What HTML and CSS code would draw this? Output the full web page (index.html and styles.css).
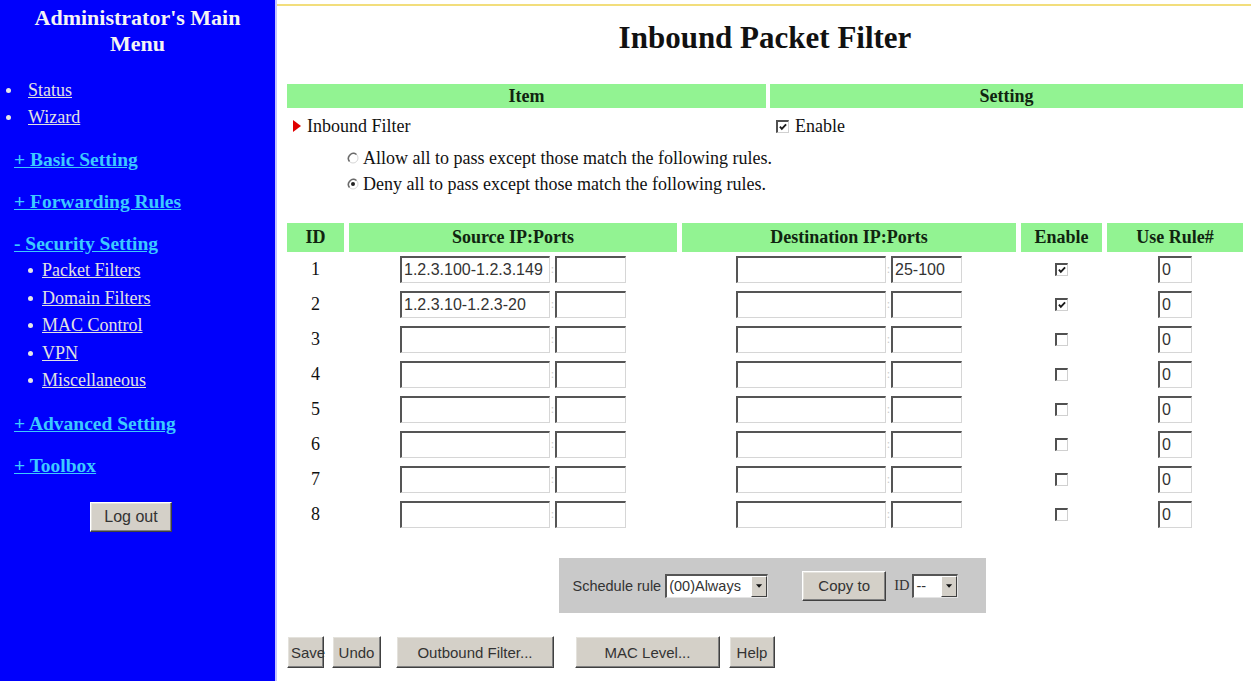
FILE: index.html
```html
<!DOCTYPE html>
<html lang="en">
<head>
<meta charset="utf-8">
<title>Inbound Packet Filter</title>
<link rel="stylesheet" href="styles.css">
</head>
<body>
<div class="page">
  <nav class="menu">
    <h1 class="menu-title">Administrator's Main<br>Menu</h1>
    <ul class="top-links">
      <li><a href="#">Status</a></li>
      <li><a href="#">Wizard</a></li>
    </ul>
    <a class="section" href="#">+ Basic Setting</a>
    <a class="section" href="#">+ Forwarding Rules</a>
    <a class="section" href="#">- Security Setting</a>
    <ul class="sub-links">
      <li><a href="#">Packet Filters</a></li>
      <li><a href="#">Domain Filters</a></li>
      <li><a href="#">MAC Control</a></li>
      <li><a href="#">VPN</a></li>
      <li><a href="#">Miscellaneous</a></li>
    </ul>
    <a class="section" href="#">+ Advanced Setting</a>
    <a class="section" href="#">+ Toolbox</a>
    <div class="logout-row"><button class="btn btn-logout" type="button">Log out</button></div>
  </nav>

  <main class="content">
    <h2 class="page-title">Inbound Packet Filter</h2>

    <div class="item-table">
      <div class="head">Item</div>
      <div class="head">Setting</div>
      <div class="item-name"><span class="arrow"></span>Inbound Filter</div>
      <div class="item-setting">
        <span class="cb checked"><svg viewBox="0 0 13 13"><path d="M2.5 6 L5 9 L10.5 3" /></svg></span>Enable
      </div>
    </div>

    <div class="policy">
      <label class="policy-line">
        <span class="radio"><svg viewBox="0 0 12 12"><circle class="r-fill" cx="6" cy="6" r="5"/><path class="r-dark" d="M9.5 2.5 A5 5 0 0 0 2.5 9.5"/></svg></span>Allow all to pass except those match the following rules.
      </label>
      <label class="policy-line">
        <span class="radio"><svg viewBox="0 0 12 12"><circle class="r-fill" cx="6" cy="6" r="5"/><path class="r-dark" d="M9.5 2.5 A5 5 0 0 0 2.5 9.5"/><circle class="r-dot" cx="6" cy="6" r="2"/></svg></span>Deny all to pass except those match the following rules.
      </label>
    </div>

    <div class="rules">
      <div class="rh">ID</div>
      <div class="rh">Source IP:Ports</div>
      <div class="rh">Destination IP:Ports</div>
      <div class="rh">Enable</div>
      <div class="rh">Use Rule#</div>

      <div class="rc id">1</div>
      <div class="rc"><input class="field ip" value="1.2.3.100-1.2.3.149"><span class="sep">:</span><input class="field port" value=""></div>
      <div class="rc"><input class="field ip" value=""><span class="sep">:</span><input class="field port" value="25-100"></div>
      <div class="rc"><span class="cb checked"><svg viewBox="0 0 13 13"><path d="M2.5 6 L5 9 L10.5 3" /></svg></span></div>
      <div class="rc"><input class="field rule" value="0"></div>

      <div class="rc id">2</div>
      <div class="rc"><input class="field ip" value="1.2.3.10-1.2.3-20"><span class="sep">:</span><input class="field port" value=""></div>
      <div class="rc"><input class="field ip" value=""><span class="sep">:</span><input class="field port" value=""></div>
      <div class="rc"><span class="cb checked"><svg viewBox="0 0 13 13"><path d="M2.5 6 L5 9 L10.5 3" /></svg></span></div>
      <div class="rc"><input class="field rule" value="0"></div>

      <div class="rc id">3</div>
      <div class="rc"><input class="field ip" value=""><span class="sep">:</span><input class="field port" value=""></div>
      <div class="rc"><input class="field ip" value=""><span class="sep">:</span><input class="field port" value=""></div>
      <div class="rc"><span class="cb"></span></div>
      <div class="rc"><input class="field rule" value="0"></div>

      <div class="rc id">4</div>
      <div class="rc"><input class="field ip" value=""><span class="sep">:</span><input class="field port" value=""></div>
      <div class="rc"><input class="field ip" value=""><span class="sep">:</span><input class="field port" value=""></div>
      <div class="rc"><span class="cb"></span></div>
      <div class="rc"><input class="field rule" value="0"></div>

      <div class="rc id">5</div>
      <div class="rc"><input class="field ip" value=""><span class="sep">:</span><input class="field port" value=""></div>
      <div class="rc"><input class="field ip" value=""><span class="sep">:</span><input class="field port" value=""></div>
      <div class="rc"><span class="cb"></span></div>
      <div class="rc"><input class="field rule" value="0"></div>

      <div class="rc id">6</div>
      <div class="rc"><input class="field ip" value=""><span class="sep">:</span><input class="field port" value=""></div>
      <div class="rc"><input class="field ip" value=""><span class="sep">:</span><input class="field port" value=""></div>
      <div class="rc"><span class="cb"></span></div>
      <div class="rc"><input class="field rule" value="0"></div>

      <div class="rc id">7</div>
      <div class="rc"><input class="field ip" value=""><span class="sep">:</span><input class="field port" value=""></div>
      <div class="rc"><input class="field ip" value=""><span class="sep">:</span><input class="field port" value=""></div>
      <div class="rc"><span class="cb"></span></div>
      <div class="rc"><input class="field rule" value="0"></div>

      <div class="rc id">8</div>
      <div class="rc"><input class="field ip" value=""><span class="sep">:</span><input class="field port" value=""></div>
      <div class="rc"><input class="field ip" value=""><span class="sep">:</span><input class="field port" value=""></div>
      <div class="rc"><span class="cb"></span></div>
      <div class="rc"><input class="field rule" value="0"></div>
    </div>

    <div class="schedule-row">
      <div class="schedule">
        <span class="sched-label">Schedule rule</span>
        <span class="select sel-rule"><span class="sel-value">(00)Always</span><span class="sel-arrow"><svg viewBox="0 0 8 5"><path d="M0 0 H7 L3.5 4 Z"/></svg></span></span>
        <button class="btn btn-copy" type="button">Copy to</button>
        <span class="sched-id">ID</span>
        <span class="select sel-id"><span class="sel-value">--</span><span class="sel-arrow"><svg viewBox="0 0 8 5"><path d="M0 0 H7 L3.5 4 Z"/></svg></span></span>
      </div>
    </div>

    <div class="actions">
      <button class="btn btn-save" type="button">Save</button>
      <button class="btn btn-undo" type="button">Undo</button>
      <button class="btn btn-outbound" type="button">Outbound Filter...</button>
      <button class="btn btn-mac" type="button">MAC Level...</button>
      <button class="btn btn-help" type="button">Help</button>
    </div>
  </main>
</div>
</body>
</html>
```

FILE: styles.css
```css
* { box-sizing: border-box; }

html, body {
  margin: 0;
  padding: 0;
  background: #ffffff;
}

body {
  font-family: "Liberation Serif", "Times New Roman", serif;
  color: #111;
}

.page {
  display: flex;
  min-height: 681px;
}

/* ---------- left navigation frame ---------- */
.menu {
  width: 277px;
  flex: none;
  background: #0000fc;
  border-right: 2px solid #c4c4ff;
  color: #f2f2f2;
}

.menu-title {
  margin: 0;
  padding-top: 5px;
  font-size: 22px;
  line-height: 26px;
  font-weight: bold;
  text-align: center;
  color: #f4f4f4;
}

.top-links,
.sub-links {
  list-style: none;
  margin: 0;
  padding: 0;
}

.top-links { margin-top: 20px; }

.top-links li,
.sub-links li {
  display: flex;
  align-items: center;
  font-size: 18px;
  line-height: 27px;
}

.sub-links li { line-height: 27.5px; }

.top-links li::before,
.sub-links li::before {
  content: "";
  flex: none;
  width: 5px;
  height: 5px;
  border-radius: 50%;
  background: #e6e6e6;
}

.top-links li::before { margin: 0 17px 0 6px; }
.sub-links li::before { margin: 0 9px 0 28px; }

.top-links a,
.sub-links a {
  color: #e2e2e2;
  text-decoration: underline;
}

.section {
  display: block;
  width: fit-content;
  margin: 15px 0 0 14px;
  font-size: 19.5px;
  line-height: 27px;
  font-weight: bold;
  color: #3ccaff;
  text-decoration: underline;
}

.logout-row {
  margin-top: 23px;
  padding-left: 90px;
}

/* ---------- buttons (classic 3D look) ---------- */
.btn {
  height: 32px;
  padding: 0 3px;
  font-family: "Liberation Sans", Arial, sans-serif;
  font-size: 15px;
  color: #333;
  background: #d4d0c8;
  border: 1px solid;
  border-color: #ffffff #404040 #404040 #ffffff;
  box-shadow: inset -1px -1px 0 #808080, inset 1px 1px 0 #e4e2dc;
  border-radius: 0;
}

.btn-logout {
  width: 82px;
  height: 30px;
  font-size: 16px;
}

/* ---------- main frame ---------- */
.content {
  flex: 1;
  margin-top: 4px;
  border-top: 2px solid #f2de7c;
  padding: 0 8px 0 10px;
  font-size: 18px;
}

.page-title {
  margin: 14px 0 0;
  font-size: 31px;
  line-height: 36px;
  font-weight: bold;
  text-align: center;
  color: #111;
}

.item-table {
  display: grid;
  grid-template-columns: 479px 1fr;
  column-gap: 4px;
  margin-top: 28px;
}

.head,
.rh {
  background: #92f392;
  font-weight: bold;
  text-align: center;
  color: #102410;
}

.head {
  height: 24px;
  line-height: 24px;
}

.item-name,
.item-setting {
  display: flex;
  align-items: center;
  margin-top: 7px;
  line-height: 22px;
}

.item-name { padding-left: 6px; }
.item-setting { padding-left: 6px; }

.arrow {
  width: 0;
  height: 0;
  margin-right: 6px;
  border-left: 8px solid #e00000;
  border-top: 6px solid transparent;
  border-bottom: 6px solid transparent;
}

/* checkbox */
.cb {
  display: inline-block;
  flex: none;
  width: 13px;
  height: 13px;
  background: #fff;
  border-top: 2px solid #505050;
  border-left: 2px solid #505050;
  border-right: 1px solid #d0d0d0;
  border-bottom: 1px solid #d0d0d0;
}

.item-setting .cb { margin-right: 6px; }

.cb svg {
  display: block;
  width: 10px;
  height: 10px;
  fill: none;
  stroke: #1a1a1a;
  stroke-width: 2.4;
}

/* radio options */
.policy {
  margin-top: 8px;
  padding-left: 60px;
}

.policy-line {
  display: flex;
  align-items: center;
  line-height: 26px;
}

.radio {
  flex: none;
  width: 12px;
  height: 12px;
  margin-right: 4px;
}

.radio svg {
  display: block;
  width: 12px;
  height: 12px;
}

.r-fill { fill: #fff; stroke: #d6d6d6; stroke-width: 1; }
.r-dark { fill: none; stroke: #6a6a6a; stroke-width: 1.5; }
.r-dot { fill: #222; }

/* rule table */
.rules {
  display: grid;
  grid-template-columns: 57px 328px 334px 81px 136px;
  grid-template-rows: 29px;
  grid-auto-rows: 35px;
  column-gap: 5px;
  margin-top: 26px;
}

.rh { line-height: 29px; }

.rc {
  display: flex;
  align-items: center;
  justify-content: center;
}

.rc.id { font-size: 18px; }

.field {
  height: 27px;
  padding: 0 2px;
  font-family: "Liberation Sans", Arial, sans-serif;
  font-size: 16px;
  color: #333;
  background: #fff;
  border-top: 2px solid #555;
  border-left: 2px solid #555;
  border-right: 1px solid #d6d6d6;
  border-bottom: 1px solid #d6d6d6;
  border-radius: 0;
  outline: none;
}

.field.ip { width: 150px; }
.field.port { width: 71px; }
.field.rule { width: 34px; }

.sep {
  width: 5px;
  text-align: center;
  font-size: 12px;
  color: #c8c8c8;
}

/* schedule bar */
.schedule-row {
  display: flex;
  justify-content: center;
  margin-top: 26px;
  padding-left: 14px;
}

.schedule {
  display: flex;
  align-items: center;
  width: 427px;
  height: 55px;
  padding: 0 14px;
  background: #c9c9c9;
  font-family: "Liberation Sans", Arial, sans-serif;
  font-size: 14.5px;
  color: #333;
}

.sched-label { margin-right: 4px; }

.select {
  display: inline-flex;
  align-items: stretch;
  height: 24px;
  background: #fff;
  border-top: 2px solid #555;
  border-left: 2px solid #555;
  border-right: 1px solid #e4e4e4;
  border-bottom: 1px solid #e4e4e4;
}

.sel-value {
  flex: 1;
  padding: 0 2px;
  line-height: 21px;
  white-space: nowrap;
}

.sel-arrow {
  display: flex;
  align-items: center;
  justify-content: center;
  width: 16px;
  background: #d4d0c8;
  border: 1px solid;
  border-color: #fff #404040 #404040 #fff;
}

.sel-arrow svg {
  width: 7px;
  height: 5px;
  fill: #111;
}

.sel-rule { width: 103px; }
.sel-id { width: 46px; }

.btn-copy {
  width: 84px;
  height: 30px;
  margin-left: 34px;
}

.sched-id {
  margin: 0 3px 0 8px;
  font-family: "Liberation Serif", "Times New Roman", serif;
}

/* bottom action buttons */
.actions {
  display: flex;
  margin-top: 23px;
}

.btn-save { width: 37px; }
.btn-undo { width: 49px; margin-left: 8px; }
.btn-outbound { width: 158px; margin-left: 15px; }
.btn-mac { width: 145px; margin-left: 21px; }
.btn-help { width: 46px; margin-left: 9px; }
```
